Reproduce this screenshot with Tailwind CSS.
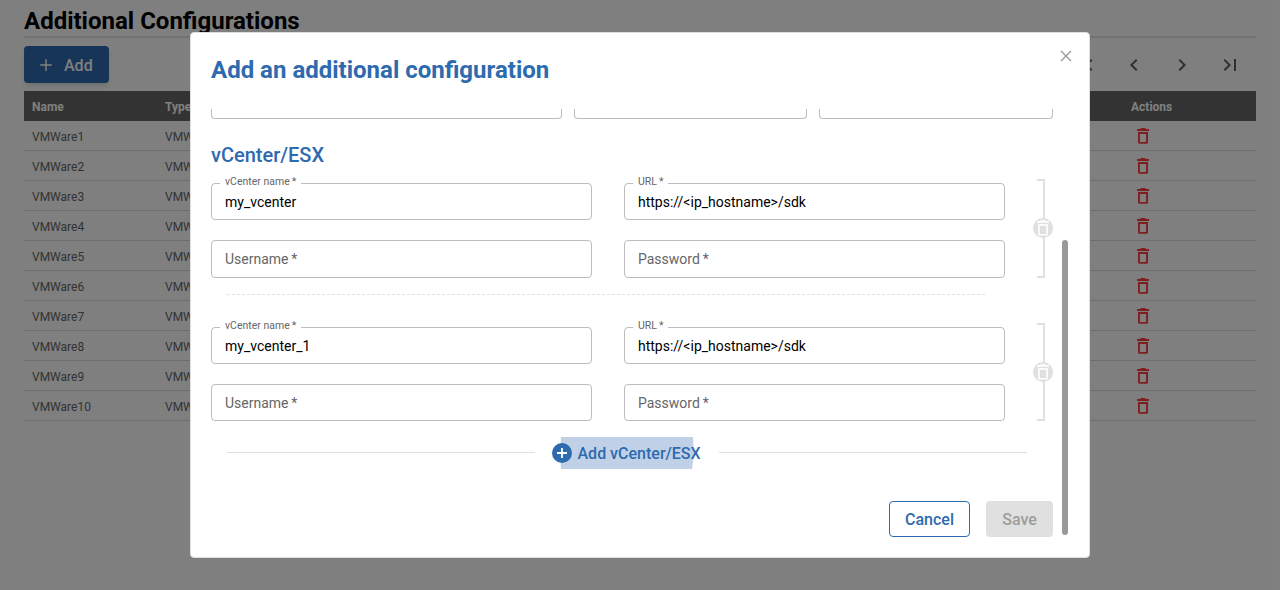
<!DOCTYPE html>
<html lang="en">
<head>
<meta charset="utf-8">
<title>Additional Configurations</title>
<script src="https://cdn.jsdelivr.net/npm/@tailwindcss/browser@4"></script>
</head>
<body class="bg-white font-[Roboto,sans-serif] text-black">
<svg class="hidden">
  <symbol id="trash" viewBox="0 0 20 20"><path d="M4 3h3q.6-1 1.400-1h3.200q.8 0 1.400 1h3V5H4z"/><path fill-rule="evenodd" d="M5 6h10v10.200q0 1.600-1.600 1.600H6.600Q5 17.800 5 16.200zM6.900 7.900v8h6.200v-8z"/></symbol>
</svg>
<div class="relative h-[590px] w-[1280px] overflow-hidden">
  <main class="px-6">
    <h1 class="h-[38px] border-b-2 border-[#e4e4e4] pt-[5px] text-[24px] leading-8 font-bold">Additional Configurations</h1>
    <div class="flex h-[53px] items-center justify-between">
      <button class="flex h-[37px] w-[85px] items-center rounded bg-[#2e6aae] pl-[14px] text-base font-medium text-white shadow-md">
        <svg class="mr-[10px] size-4" viewBox="0 0 16 16" stroke="currentColor" stroke-width="1.500"><path d="M8 2.200v11.600M2.200 8h11.600"/></svg><span class="pt-[2px]">Add</span>
      </button>
      <div class="flex gap-6 pt-px pr-[14px] text-[#606060]">
        <svg class="size-6" viewBox="0 0 24 24" fill="currentColor"><path d="M18.410 16.590L13.820 12l4.590-4.590L17 6l-6 6 6 6zM6 6h2v12H6z"/></svg>
        <svg class="size-6" viewBox="0 0 24 24" fill="currentColor"><path d="M15.410 7.410L14 6l-6 6 6 6 1.410-1.410L10.830 12z"/></svg>
        <svg class="size-6" viewBox="0 0 24 24" fill="currentColor"><path d="M10 6L8.590 7.410 13.170 12l-4.580 4.590L10 18l6-6z"/></svg>
        <svg class="size-6" viewBox="0 0 24 24" fill="currentColor"><path d="M5.590 7.410L10.180 12l-4.590 4.590L7 18l6-6-6-6zM16 6h2v12h-2z"/></svg>
      </div>
    </div>
    <div class="flex h-[30px] items-center bg-[#666] pt-px text-xs font-bold text-white">
      <span class="w-[141px] pl-2">Name</span><span class="w-[966px]">Type</span><span>Actions</span>
    </div>
    <div id="rows"></div>
  </main>

  <div class="absolute inset-0 bg-black/50"></div>

  <section class="absolute top-8 left-[190px] flex h-[526px] w-[900px] flex-col rounded border border-[#dedede] bg-white pl-5">
    <header class="flex h-[76px] items-start justify-between pr-[17px]">
      <h2 class="pt-[21px] text-[24px] leading-8 font-bold text-[#2e6aae]">Add an additional configuration</h2>
      <svg class="mt-[17px] size-3" viewBox="0 0 12 12" fill="none" stroke="#999" stroke-width="1.400"><path d="M1 1l10 10M11 1L1 11"/></svg>
    </header>
    <div class="flex">
      <div class="w-[842px]">
        <div class="flex gap-3">
          <div class="h-[10px] w-[351px] rounded-b border border-t-0 border-[#bdbdbd]"></div>
          <div class="h-[10px] w-[233px] rounded-b border border-t-0 border-[#bdbdbd]"></div>
          <div class="h-[10px] w-[234px] rounded-b border border-t-0 border-[#bdbdbd]"></div>
        </div>
        <h3 class="h-[60px] pt-[22px] text-[20px] leading-7 font-medium text-[#2e6aae]">vCenter/ESX</h3>
        <div id="groups"></div>
        <div class="mt-4 flex h-8 items-center pr-[26px] pl-4">
          <div class="mb-px h-px w-[308px] bg-[#e0e0e0]"></div>
          <button class="relative ml-[17px] flex h-8 w-[167px] items-center text-base font-medium text-[#2e6aae]">
            <span class="absolute inset-y-0 left-2 w-[134px] bg-[#c0d1e7] [clip-path:polygon(1px_0,133px_0,134px_50%,132px_100%,1px_100%,0_50%)]"></span>
            <svg class="relative mr-[5.500px] size-5" viewBox="0 0 20 20"><circle cx="10" cy="10" r="10" fill="#2e6aae"/><path d="M10 5v10M5 10h10" stroke="#fff" stroke-width="1.800"/></svg>
            <span class="relative pt-px whitespace-nowrap">Add vCenter/ESX</span>
          </button>
          <div class="mb-px h-px w-[308px] bg-[#e0e0e0]"></div>
        </div>
        <footer class="mt-8 flex justify-end gap-4 text-base font-medium">
          <button class="h-9 w-[81px] rounded border border-[#2e6aae] pt-px text-[#2e6aae]">Cancel</button>
          <button class="h-9 w-[67px] rounded bg-[#e0e0e0] pt-px text-[#9c9c9c]">Save</button>
        </footer>
      </div>
      <div class="mt-[131px] ml-[9px] h-[295px] w-1.5 rounded-full bg-[#999]"></div>
    </div>
  </section>
</div>
<script>
  document.getElementById('rows').innerHTML = Array.from({length: 10}, (_, i) => `
    <div class="flex h-[30px] items-center border-b border-[#dcdcdc] text-xs text-[#666]">
      <span class="w-[141px] pt-[2px] pl-2">VMWare${i + 1}</span><span class="w-[968px] pt-[2px]">VMWare</span>
      <svg class="size-5" fill="#ff3c40"><use href="#trash"/></svg>
    </div>`).join('');

  const star = '<span class="ml-[.2em]">*</span>';
  const filled = (label, value, gap) => `
    <div class="relative flex h-[37px] w-[381px] items-center rounded border border-[#bdbdbd] pl-[13px] pt-px">
      <span class="absolute -top-[10px] left-2 bg-white pl-[5px] text-[10.500px] leading-4 whitespace-nowrap text-[#666] ${gap}">${label}${star}</span>${value}
    </div>`;
  const empty = (label, h) => `
    <div class="flex w-[381px] items-center rounded border border-[#bdbdbd] pl-[13px] text-[#666] ${h}">${label}${star}</div>`;
  const group = (name, groupHeight, h) => `
    <div class="flex justify-between pr-2 ${groupHeight}">
      <div class="grid grid-cols-2 content-start gap-x-8 gap-y-5 pt-1 text-sm">
        ${filled('vCenter name', name, 'w-[81px]')}${filled('URL', 'https://&lt;ip_hostname&gt;/sdk', 'w-[35px]')}
        ${empty('Username', h)}${empty('Password', h)}
      </div>
      <div class="relative w-2 border-2 border-l-0 border-[#e0e0e0]">
        <div class="absolute top-[37px] -left-1 size-5 rounded-full bg-[#e0e0e0]"><svg class="size-5" fill="#fafafa"><use href="#trash"/></svg></div>
      </div>
    </div>`;
  document.getElementById('groups').innerHTML = group('my_vcenter', 'h-[99px]', 'h-[38px]')
    + '<div class="mt-4 mb-[28px] ml-4 h-px w-[758px] bg-[repeating-linear-gradient(90deg,#e0e0e0_0_3px,transparent_3px_5px)]"></div>'
    + group('my_vcenter_1', 'h-[98px]', 'h-[37px]');
</script>
</body>
</html>
